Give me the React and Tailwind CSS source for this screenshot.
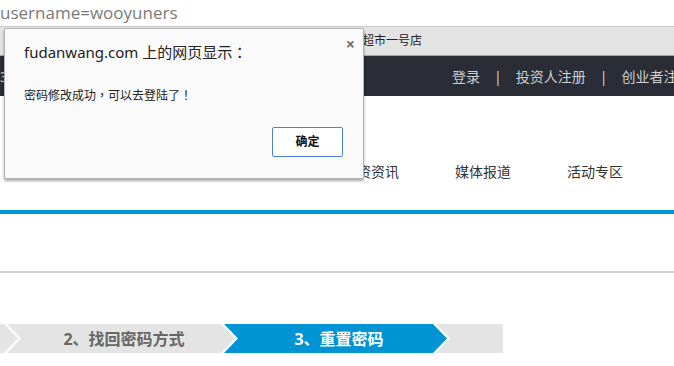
export default function App() {
  const cjk = { fontFamily: '"Noto Sans", "Noto Sans CJK SC", sans-serif' }
  const dlg = { fontFamily: '"Noto Sans", "Noto Sans CJK TC", sans-serif' }
  return (
    <div className="relative w-[674px] h-[366px] overflow-hidden bg-white" style={cjk}>
      {/* address bar */}
      <div className="h-[27px] border-b border-[#c8c8c8] flex items-center text-[17px] leading-none text-[#7a7a7a] whitespace-nowrap" style={{ fontFamily: '"Open Sans", sans-serif' }}>
        <span className="-mt-[1px]">username=wooyuners</span>
      </div>

      {/* tab strip */}
      <div className="h-[29px] bg-[#e3e3e3] border-b border-[#a3a3a3] flex items-center pl-[362px] text-[12px] text-[#222] whitespace-nowrap">
        超市一号店
      </div>

      {/* dark top nav */}
      <div className="h-[40px] bg-[#2a2d35] flex items-center whitespace-nowrap text-[14px] text-[#cfd0d2]">
        <span className="w-[452px] shrink-0">3</span>
        <span className="shrink-0">登录</span>
        <span className="shrink-0 mx-[14px]">|</span>
        <span className="shrink-0">投资人注册</span>
        <span className="shrink-0 mx-[14px]">|</span>
        <span className="shrink-0">创业者注册</span>
      </div>

      {/* main nav */}
      <div className="h-[114px] flex items-start pt-[67px] pl-[7px] text-[14px] leading-[18px] text-[#333] whitespace-nowrap">
        {['首页', '我要投资', '我要融资', '投资资讯', '媒体报道', '活动专区'].map(t => (
          <div key={t} className="w-[112px] shrink-0">{t}</div>
        ))}
      </div>
      <div className="h-[4px] bg-[#0094d4]" />

      <div className="h-[57px]" />
      <div className="h-[2px] bg-[#d2d2d2]" />
      <div className="h-[51px]" />

      {/* steps */}
      <div className="flex h-[29px] text-[16px] font-bold whitespace-nowrap">
        <div className="w-[18px] shrink-0 bg-[#e4e4e4] [clip-path:polygon(0_0,4px_0,18px_50%,4px_100%,0_100%)]" />
        <div className="w-[228px] shrink-0 -ml-[11px] bg-[#e4e4e4] text-[#666] flex items-center justify-center pl-[20px] pr-[14px] [clip-path:polygon(0_0,214px_0,228px_50%,214px_100%,0_100%,14px_50%)]">
          2、找回密码方式
        </div>
        <div className="w-[223px] shrink-0 -ml-[11px] bg-[#0094d4] text-white flex items-center justify-center pl-[21px] pr-[14px] [clip-path:polygon(0_0,209px_0,223px_50%,209px_100%,0_100%,14px_50%)]">
          3、重置密码
        </div>
        <div className="w-[67px] shrink-0 -ml-[11px] bg-[#e4e4e4] [clip-path:polygon(0_0,100%_0,100%_100%,0_100%,14px_50%)]" />
      </div>

      {/* alert dialog */}
      <div className="absolute left-[4px] top-[28px] w-[360px] h-[151px] bg-[#fafafa] border border-[#b4b4b4] rounded-[2px] shadow-[0_2px_3px_rgba(0,0,0,0.35)] pt-[13px] px-[19px]" style={dlg}>
        <div className="absolute top-[7px] right-[8px] text-[16px] font-bold text-[#6f6f6f] leading-none">×</div>
        <div className="text-[15px] leading-[20px] text-[#222]">fudanwang.com 上的网页显示：</div>
        <div className="mt-[26px] text-[12px] leading-[16px] text-[#222]">密码修改成功，可以去登陆了！</div>
        <div className="mt-[23px] flex justify-end pr-[1px]">
          <button className="w-[71px] h-[30px] bg-white border border-[#4d7fe0] rounded-[2px] text-[12px] font-bold text-[#111]">确定</button>
        </div>
      </div>
    </div>
  )
}
